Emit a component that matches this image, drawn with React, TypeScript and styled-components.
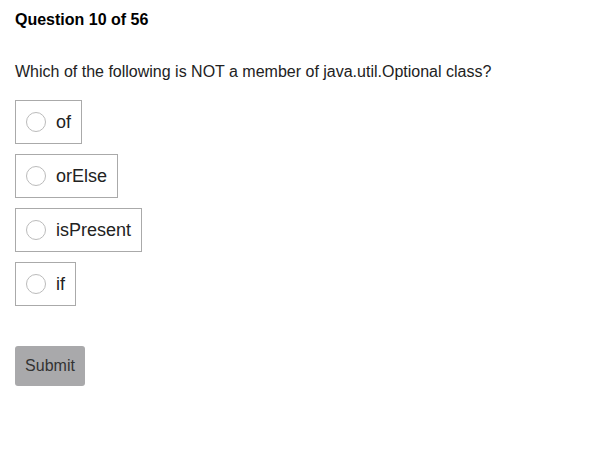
import React from "react";
import styled, { createGlobalStyle } from "styled-components";

const Global = createGlobalStyle`
  html, body { margin: 0; padding: 0; background: #fff; }
  body { font-family: Arial, "Liberation Sans", sans-serif; color: #222; }
`;

const Page = styled.div`
  padding: 11px 15px 10px;
  display: flex;
  flex-direction: column;
  align-items: flex-start;
`;

const Title = styled.h1`
  margin: 0;
  font-size: 16px;
  font-weight: bold;
  line-height: 18px;
  color: #000;
`;

const Question = styled.p`
  margin: 34px 0 0;
  font-size: 16px;
  line-height: 18px;
`;

const Options = styled.div`
  margin-top: 19px;
  display: flex;
  flex-direction: column;
  align-items: flex-start;
  gap: 10px;
`;

const Option = styled.label`
  display: flex;
  align-items: center;
  gap: 10px;
  height: 44px;
  box-sizing: border-box;
  padding: 0 10px;
  border: 1px solid #aaa;
  font-size: 18px;
  cursor: pointer;
`;

const Radio = styled.span`
  width: 20px;
  height: 20px;
  box-sizing: border-box;
  border-radius: 50%;
  border: 1px solid #bbb;
  background: #fff;
`;

const Submit = styled.button`
  margin-top: 40px;
  width: 70px;
  height: 40px;
  border: none;
  border-radius: 3px;
  background: #a9a9ab;
  color: #333;
  font-family: Arial, "Liberation Sans", sans-serif;
  font-size: 16px;
  padding: 0;
`;

const options = ["of", "orElse", "isPresent", "if"];

export default function App() {
  return (
    <>
      <Global />
      <Page>
        <Title>Question 10 of 56</Title>
        <Question>Which of the following is NOT a member of java.util.Optional class?</Question>
        <Options>
          {options.map((o) => (
            <Option key={o}>
              <Radio />
              {o}
            </Option>
          ))}
        </Options>
        <Submit>Submit</Submit>
      </Page>
    </>
  );
}
